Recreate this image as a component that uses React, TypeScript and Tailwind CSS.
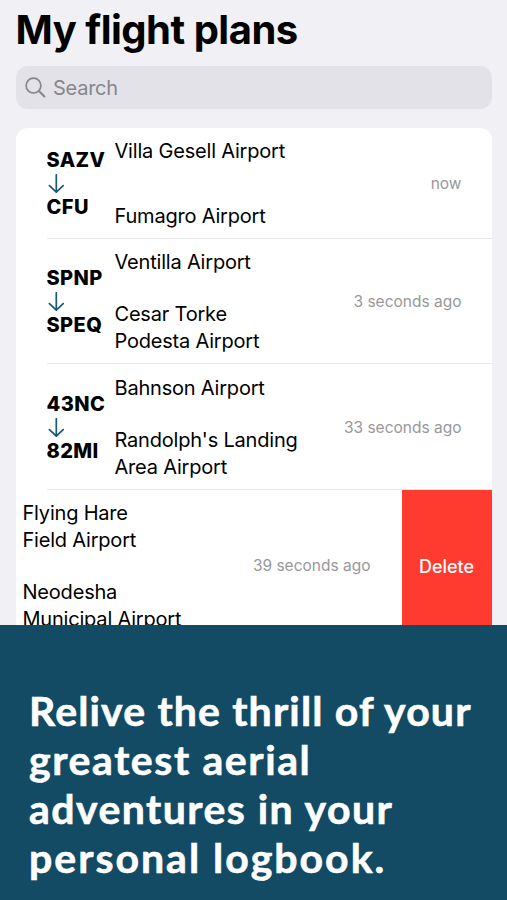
import clsx from 'clsx';

type Plan = {
  from: string;
  to: string;
  origin: string[];
  destination: string[];
  time: string;
};

const plans: Plan[] = [
  { from: 'SAZV', to: 'CFU', origin: ['Villa Gesell Airport'], destination: ['Fumagro Airport'], time: 'now' },
  { from: 'SPNP', to: 'SPEQ', origin: ['Ventilla Airport'], destination: ['Cesar Torke', 'Podesta Airport'], time: '3 seconds ago' },
  { from: '43NC', to: '82MI', origin: ['Bahnson Airport'], destination: ["Randolph's Landing", 'Area Airport'], time: '33 seconds ago' },
];

const slogan = [
  { text: 'Relive the thrill of your', tracking: 'tracking-[1.15px]' },
  { text: 'greatest aerial', tracking: 'tracking-[1.6px]' },
  { text: 'adventures in your', tracking: 'tracking-[1.45px]' },
  { text: 'personal logbook.', tracking: 'tracking-[2px]' },
];

function SearchIcon() {
  return (
    <svg className="size-[22px] shrink-0" viewBox="0 0 22 22" fill="none" stroke="#86868b" strokeLinecap="round">
      <circle cx="8.5" cy="8.6" r="7.4" strokeWidth="1.7" />
      <path d="M14.1 14.2L19.4 19.4" strokeWidth="2.1" />
    </svg>
  );
}

function ArrowDown() {
  return (
    <svg
      className="h-5 w-[18px]"
      viewBox="0 0 18 20"
      fill="none"
      stroke="#175a78"
      strokeWidth="1.7"
      strokeLinecap="round"
      strokeLinejoin="round"
    >
      <path d="M9.3 .8V18.2M2.4 11.6L9.3 18.2L16.2 11.6" />
    </svg>
  );
}

function Names({ lines }: { lines: string[] }) {
  return (
    <div>
      {lines.map((line) => (
        <p key={line} className="whitespace-nowrap">{line}</p>
      ))}
    </div>
  );
}

function PlanRow({ plan, first }: { plan: Plan; first: boolean }) {
  return (
    <div className="pl-[31px]">
      <div
        className={clsx(
          'flex items-center border-b border-[#e9e9eb] pr-[30px]',
          first ? 'h-[111px]' : 'h-[125.5px]'
        )}
      >
        <div className="flex w-[68px] shrink-0 flex-col pt-[3px] text-[20px] leading-[27px] font-extrabold tracking-[0.4px]">
          <span>{plan.from}</span>
          <ArrowDown />
          <span>{plan.to}</span>
        </div>
        <div className="flex h-full flex-col justify-between pt-[10.5px] pb-[8px] text-[20px] leading-[27px] tracking-[-0.2px]">
          <Names lines={plan.origin} />
          <Names lines={plan.destination} />
        </div>
        <span className="ml-auto pt-[2px] text-[15.5px] whitespace-nowrap text-[#98989b]">{plan.time}</span>
      </div>
    </div>
  );
}

export default function App() {
  return (
    <div className="flex h-[900px] w-[507px] flex-col overflow-hidden bg-[#f1f0f5] font-['Inter',sans-serif] text-black">
      <div className="flex h-[625px] flex-col overflow-hidden px-[15.5px]">
        <h1 className="mt-[6px] h-[60px] shrink-0 text-[40px] leading-[48px] font-bold tracking-[-0.5px] whitespace-nowrap">
          My flight plans
        </h1>
        <div className="flex h-[43px] shrink-0 items-center gap-[6.5px] rounded-[12px] bg-[#e3e2e8] px-[9px] text-[20px] tracking-[-0.25px] text-[#86868b]">
          <SearchIcon />
          <span>Search</span>
        </div>

        <div className="mt-[18.5px] shrink-0 overflow-hidden rounded-[12px] bg-white">
          {plans.map((plan, i) => (
            <PlanRow key={plan.from} plan={plan} first={i === 0} />
          ))}

          {/* swiped row */}
          <div className="flex h-[153px]">
            <div className="flex flex-1 items-center pr-[31px] pl-[7px]">
              <div className="flex h-full flex-col justify-between pt-[10.5px] pb-[9.5px] text-[20px] leading-[27px] tracking-[-0.2px]">
                <Names lines={['Flying Hare', 'Field Airport']} />
                <Names lines={['Neodesha', 'Municipal Airport']} />
              </div>
              <span className="ml-auto text-[15.5px] whitespace-nowrap text-[#98989b]">39 seconds ago</span>
            </div>
            <button className="w-[90px] bg-[#ff3b30] text-[18px] font-medium text-white">Delete</button>
          </div>
        </div>
      </div>

      <div className="h-[275px] bg-[#144b64] px-[29px] pt-[61px] font-['Lato',sans-serif] text-[41px] leading-[49px] font-bold text-white [-webkit-text-stroke:0.6px_white]">
        {slogan.map((line) => (
          <p key={line.text} className={clsx('whitespace-nowrap', line.tracking)}>{line.text}</p>
        ))}
      </div>
    </div>
  );
}
